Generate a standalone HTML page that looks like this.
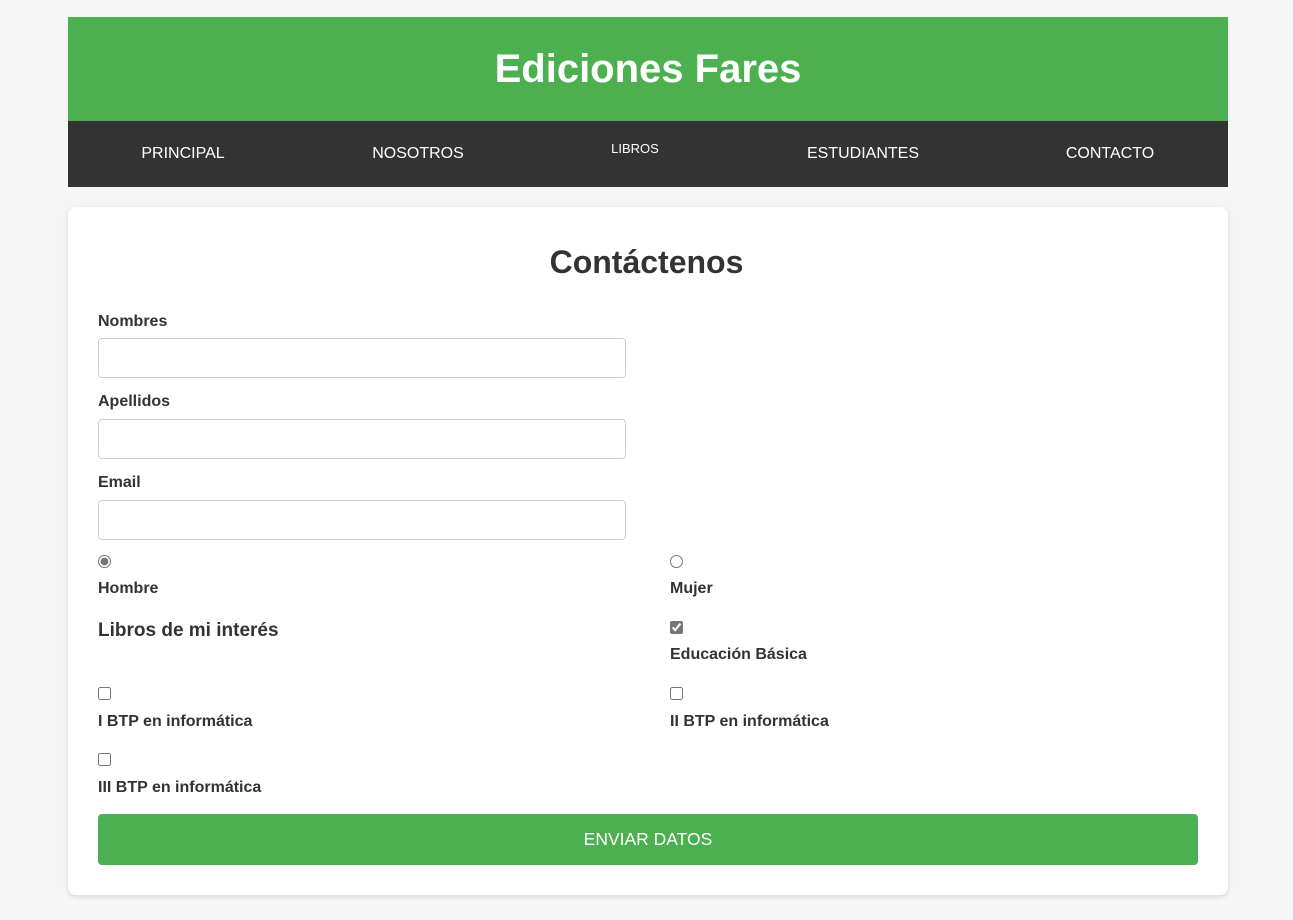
<!DOCTYPE html><html><head><meta charset="utf-8"><style>
body{margin:0;background:#f6f6f6;font-family:"Liberation Sans",Arial,sans-serif;color:#333;width:1293px;height:920px;position:relative;overflow:hidden}
.a{position:absolute}
header{left:68px;top:17px;width:1160px;height:104px;background:#4CAF50;color:#fff;font-size:40px;font-weight:bold;text-align:center;line-height:104px}
nav{left:68px;top:121px;width:1160px;height:66px;background:#333}
nav span{position:absolute;color:#fff;font-size:16px;top:24px;transform:translateX(-50%)}
.card{left:68px;top:207px;width:1160px;height:688px;background:#fff;border-radius:8px;box-shadow:0 2px 6px rgba(0,0,0,.12)}
h2{margin:0;left:0;width:1293px;top:244px;text-align:center;font-size:32px;font-weight:bold}
.l{font-weight:bold;font-size:16px;left:98px}
.in{left:98px;width:526px;height:38px;border:1px solid #ccc;border-radius:4px;background:#fff}
input{margin:0;width:13px;height:13px;accent-color:#777}
.btn{left:98px;top:814px;width:1100px;height:51px;background:#4CAF50;border-radius:4px;color:#fff;font-size:17.5px;text-align:center;line-height:51px}
</style></head><body>
<header class="a">Ediciones Fares</header>
<nav class="a"><span style="left:115px">PRINCIPAL</span><span style="left:350px">NOSOTROS</span><span style="left:567px;font-size:13px;top:20px">LIBROS</span><span style="left:795px">ESTUDIANTES</span><span style="left:1042px">CONTACTO</span></nav>
<div class="a card"></div>
<h2 class="a">Contáctenos</h2>
<div class="a l" style="top:313px">Nombres</div><div class="a in" style="top:338px"></div>
<div class="a l" style="top:393px">Apellidos</div><div class="a in" style="top:419px"></div>
<div class="a l" style="top:474px">Email</div><div class="a in" style="top:500px"></div>
<input class="a" type="radio" checked style="left:98px;top:555px">
<div class="a l" style="top:580px">Hombre</div>
<input class="a" type="radio" style="left:670px;top:555px">
<div class="a l" style="top:580px;left:670px">Mujer</div>
<div class="a l" style="top:620px;font-size:19px">Libros de mi interés</div>
<input class="a" type="checkbox" checked style="left:670px;top:621px">
<div class="a l" style="top:646px;left:670px">Educación Básica</div>
<input class="a" type="checkbox" style="left:98px;top:687px">
<div class="a l" style="top:713px">I BTP en informática</div>
<input class="a" type="checkbox" style="left:670px;top:687px">
<div class="a l" style="top:713px;left:670px">II BTP en informática</div>
<input class="a" type="checkbox" style="left:98px;top:753px">
<div class="a l" style="top:779px">III BTP en informática</div>
<div class="a btn">ENVIAR DATOS</div>
</body></html>
